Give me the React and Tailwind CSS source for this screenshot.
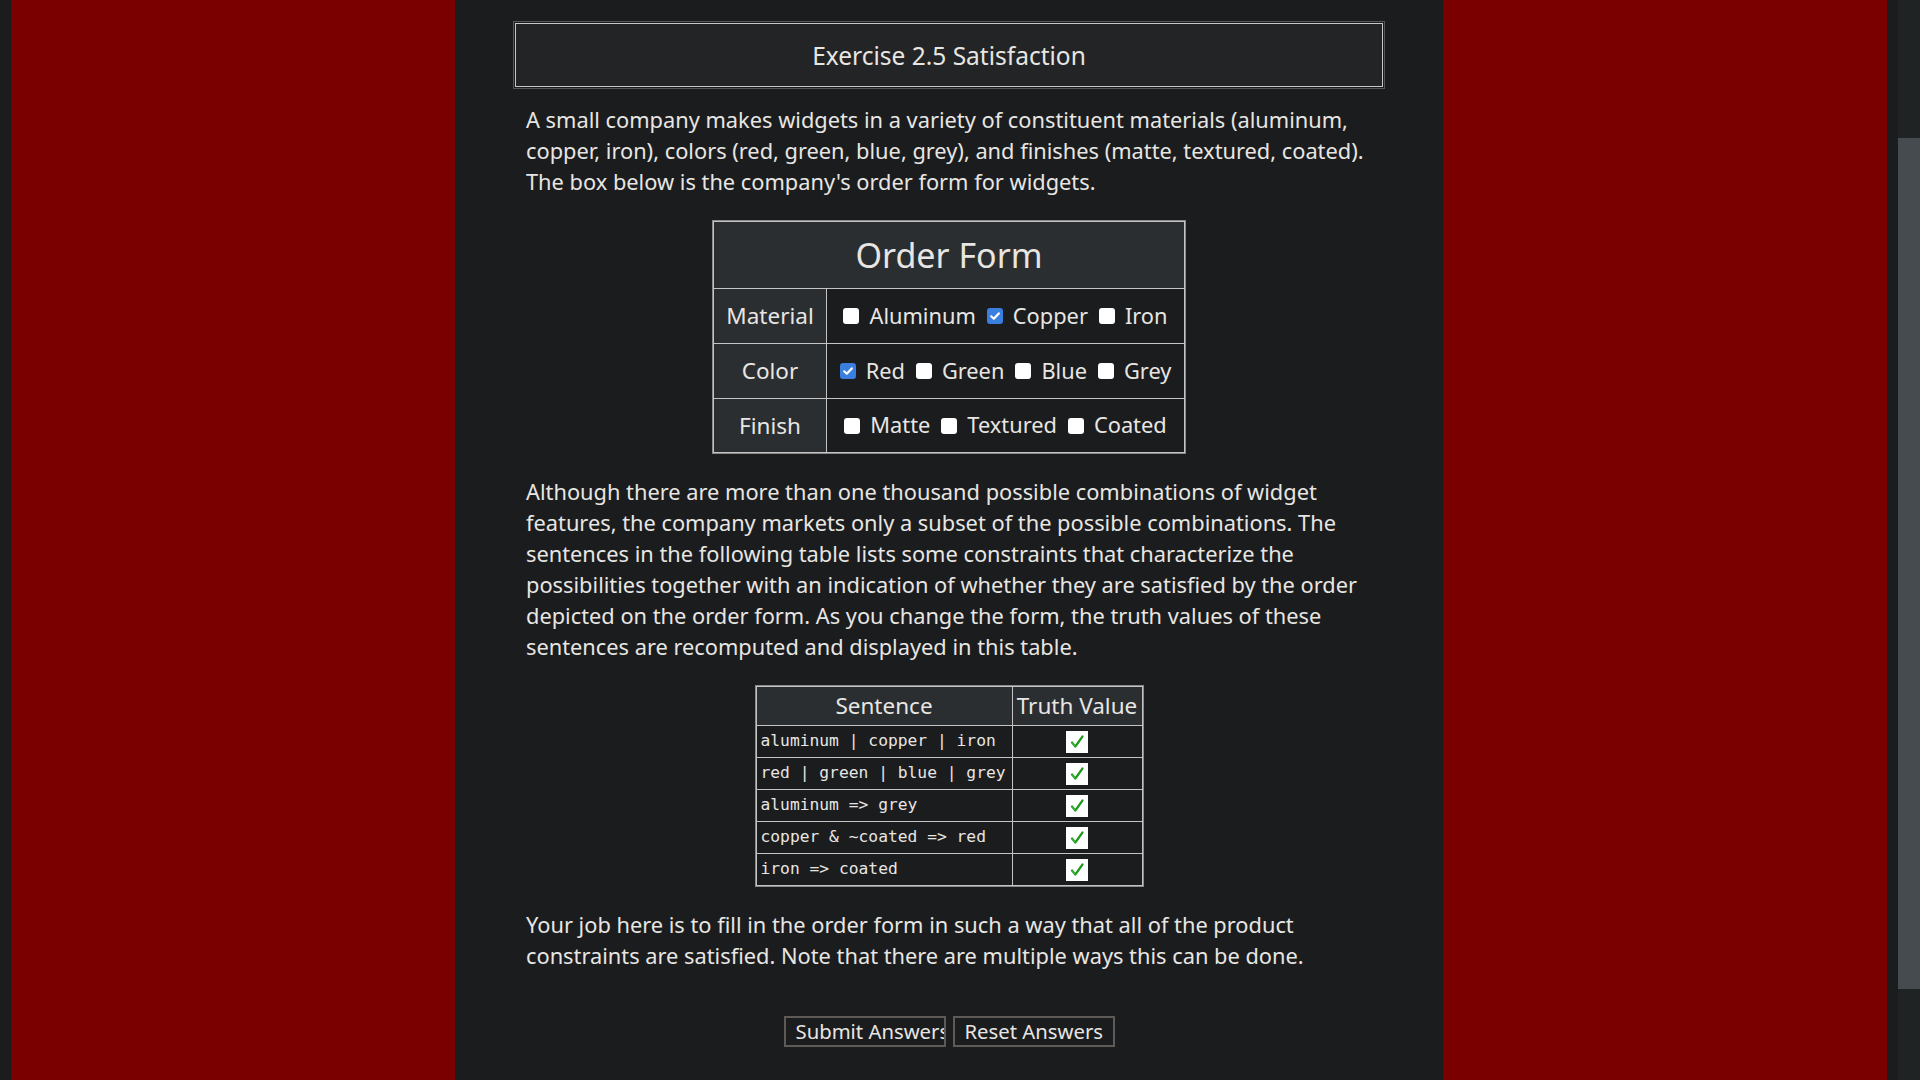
import React from "react";

function Box({ checked }) {
  if (checked) {
    return (
      <span className="inline-flex w-[16px] h-[16px] rounded-[3px] bg-[#3a7fe0] items-center justify-center shrink-0">
        <svg width="12" height="12" viewBox="0 0 12 12">
          <path d="M2.2 6.3 L4.8 8.7 L9.8 3.4" fill="none" stroke="#ffffff" strokeWidth="2.2" strokeLinecap="round" strokeLinejoin="round" />
        </svg>
      </span>
    );
  }
  return <span className="inline-block w-[16px] h-[16px] rounded-[3px] bg-white shrink-0" />;
}

function Options({ items }) {
  return (
    <div className="flex items-center justify-center text-[21.8px]">
      {items.map(([label, checked], i) => (
        <div key={label} className={"flex items-center " + (i > 0 ? "ml-[11px]" : "")}>
          <Box checked={checked} />
          <span className="ml-[10px]">{label}</span>
        </div>
      ))}
    </div>
  );
}

function Check() {
  return (
    <svg width="22" height="22" viewBox="0 0 22 22" className="block mx-auto">
      <rect x="0" y="0" width="22" height="22" fill="#ffffff" />
      <path d="M6 11.5 L9.3 15.5 L16.5 5.5" fill="none" stroke="#1e9a1e" strokeWidth="2.2" strokeLinecap="round" strokeLinejoin="round" />
      <path d="M6.5 12 L9.3 15.2" fill="none" stroke="#5cc45c" strokeWidth="1" />
    </svg>
  );
}

export default function App() {
  const sentences = [
    "aluminum | copper | iron",
    "red | green | blue | grey",
    "aluminum => grey",
    "copper & ~coated => red",
    "iron => coated",
  ];
  return (
    <div className="w-[1920px] h-[1080px] overflow-hidden flex bg-[#1b1c1e] text-[#e8e6e3] font-['Noto_Sans',sans-serif]">
      <div className="w-[11px] shrink-0" />
      <div className="w-[444px] shrink-0 bg-[#7a0000]" />
      <div className="w-[988px] shrink-0 flex flex-col">
        <div className="mx-[58px] mt-[21px] border border-[#54585b] p-px">
          <div className="border border-[#c8c8c8] bg-[#222426] h-[64px] pt-[2px] flex items-center justify-center text-[24.5px]">
            Exercise 2.5 Satisfaction
          </div>
        </div>
        <div className="mx-[71px] text-[21.8px] leading-[31px]">
          <p className="mt-[15px]">
            A small company makes widgets in a variety of constituent materials (aluminum, copper, iron), colors (red, green, blue, grey), and finishes (matte, textured, coated). The box below is the company's order form for widgets.
          </p>
        </div>
        <div className="mt-[23px] self-center border border-[#8a8a8a]">
          <table className="border-collapse text-[22.5px]">
            <tbody>
              <tr>
                <td colSpan={2} className="border border-[#c4c4c4] bg-[#2b2e31] h-[67px] text-center text-[34px]">
                  Order Form
                </td>
              </tr>
              <tr>
                <td className="border border-[#c4c4c4] bg-[#2b2e31] w-[113px] h-[55px] text-center">Material</td>
                <td className="border border-[#c4c4c4] w-[358px] px-[6px]">
                  <Options items={[["Aluminum", false], ["Copper", true], ["Iron", false]]} />
                </td>
              </tr>
              <tr>
                <td className="border border-[#c4c4c4] bg-[#2b2e31] h-[55px] text-center">Color</td>
                <td className="border border-[#c4c4c4] px-[6px]">
                  <Options items={[["Red", true], ["Green", false], ["Blue", false], ["Grey", false]]} />
                </td>
              </tr>
              <tr>
                <td className="border border-[#c4c4c4] bg-[#2b2e31] h-[54px] text-center">Finish</td>
                <td className="border border-[#c4c4c4] px-[6px]">
                  <Options items={[["Matte", false], ["Textured", false], ["Coated", false]]} />
                </td>
              </tr>
            </tbody>
          </table>
        </div>
        <div className="mx-[71px] text-[21.8px] leading-[31px]">
          <p className="mt-[22px]">
            Although there are more than one thousand possible combinations of widget features, the company markets only a subset of the possible combinations. The sentences in the following table lists some constraints that characterize the possibilities together with an indication of whether they are satisfied by the order depicted on the order form. As you change the form, the truth values of these sentences are recomputed and displayed in this table.
          </p>
        </div>
        <div className="mt-[23px] self-center border border-[#8a8a8a]">
          <table className="border-collapse">
            <tbody>
              <tr className="text-[22.5px]">
                <td className="border border-[#c4c4c4] bg-[#2b2e31] w-[256px] h-[39px] text-center">Sentence</td>
                <td className="border border-[#c4c4c4] bg-[#2b2e31] w-[130px] text-center whitespace-nowrap px-[3px]">Truth Value</td>
              </tr>
              {sentences.map((s) => (
                <tr key={s}>
                  <td className="border border-[#c4c4c4] h-[32px] pl-[4px] pr-[2px] font-['DejaVu_Sans_Mono',monospace] text-[16.3px] whitespace-pre">
                    {s}
                  </td>
                  <td className="border border-[#c4c4c4]">
                    <Check />
                  </td>
                </tr>
              ))}
            </tbody>
          </table>
        </div>
        <div className="mx-[71px] text-[21.8px] leading-[31px]">
          <p className="mt-[22px]">
            Your job here is to fill in the order form in such a way that all of the product constraints are satisfied. Note that there are multiple ways this can be done.
          </p>
        </div>
        <div className="mt-[45px] self-center flex gap-[7px] text-[20.3px]">
          <button className="w-[162px] h-[31px] border-2 border-[#5f5a55] bg-[#1b1c1e] overflow-hidden whitespace-nowrap text-left pl-[10px] leading-none">
            Submit Answers
          </button>
          <button className="w-[162px] h-[31px] border-2 border-[#5f5a55] bg-[#1b1c1e] overflow-hidden whitespace-nowrap text-left pl-[10px] leading-none">
            Reset Answers
          </button>
        </div>
      </div>
      <div className="w-[444px] shrink-0 bg-[#7a0000]" />
      <div className="w-[11px] shrink-0" />
      <div className="w-[22px] shrink-0 bg-[#202324] flex flex-col">
        <div className="h-[138px]" />
        <div className="h-[851px] bg-[#454b4e]" />
      </div>
    </div>
  );
}
